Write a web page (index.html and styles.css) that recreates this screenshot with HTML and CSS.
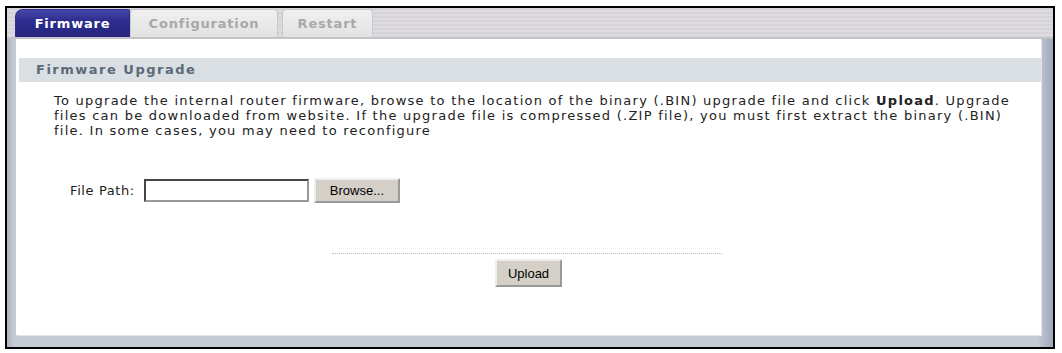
FILE: index.html
```html
<html>
  <head>
    <link rel="stylesheet" href="styles.css">
  </head>
  <body>
    <div class="frame">
      <nav class="tabs">
        <span class="tab active">Firmware</span>
        <span class="tab">Configuration</span>
        <span class="tab">Restart</span>
      </nav>
      <div class="panel">
        <h2>Firmware Upgrade</h2>
        <p class="intro">
          To upgrade the internal router firmware, browse to the location of the binary (.BIN) upgrade file and click <b>Upload</b>. Upgrade<br>
          files can be downloaded from website. If the upgrade file is compressed (.ZIP file), you must first extract the binary (.BIN)<br>
          file. In some cases, you may need to reconfigure
        </p>
        <div class="file-row">
          <label>File Path:</label>
          <input type="text" class="path">
          <button>Browse...</button>
        </div>
        <div class="actions">
          <hr>
          <button>Upload</button>
        </div>
      </div>
    </div>
  </body>
</html>
```

FILE: styles.css
```css
:root {
  --tab-blue: #2d2d8f;
  --band: #d9dfe3;
  --band-text: #5c6a78;
  --frame: #8e9ab0;
  --text: #222;
}

body {
  margin: 0;
  background: #fff;
  font-family: "DejaVu Sans", Verdana, sans-serif;
  color: var(--text);
}

.frame {
  margin: 6px 0 0 5px;
  width: 1046px;
  height: 339px;
  border: 2px solid #000;
  background: linear-gradient(to right, #aeb4c3, #c6cad4 7px, #c6cad4 1030px, #9ea8bc);
  background-color: var(--frame);
  display: flex;
  flex-direction: column;
}

.tabs {
  height: 29px;
  padding-left: 8px;
  display: flex;
  align-items: flex-end;
  background: repeating-linear-gradient(to bottom, #d6d4d9 0, #d6d4d9 2px, #dddbe0 2px, #dddbe0 4px);
  border-bottom: 2px solid #c4c4c8;
}

.tab {
  height: 28px;
  box-sizing: border-box;
  display: flex;
  align-items: center;
  justify-content: center;
  font-size: 13px;
  letter-spacing: 0.8px;
  font-weight: bold;
  color: #a8a8a8;
  background: linear-gradient(to bottom, #f0f0f0, #e2e2e2);
  border: 1px solid #c8c8c8;
  border-bottom: none;
  border-radius: 4px 4px 0 0;
}

.tab.active {
  width: 115px;
  color: #fff;
  background: linear-gradient(to bottom, #4848a8, var(--tab-blue) 40%, #26267f);
  border-color: var(--tab-blue);
  border-radius: 8px 2px 0 0;
}

.tab:nth-child(2) {
  width: 148px;
  margin-right: 4px;
}

.tab:nth-child(3) {
  width: 91px;
}

.panel {
  flex: 1;
  background: #fff;
  margin: 0 12px 12px 9px;
  padding-top: 19px;
  box-shadow: 1px 1px 0 #e4e6ec;
}

h2 {
  margin: 0 0 0 3px;
  height: 24px;
  line-height: 24px;
  padding-left: 17px;
  background: var(--band);
  font-size: 13px;
  letter-spacing: 1.5px;
  color: var(--band-text);
}

.intro {
  margin: 11px 0 0 38px;
  font-size: 13px;
  letter-spacing: 1.25px;
  line-height: 15px;
  white-space: nowrap;
}

.file-row {
  margin: 40px 0 0 54px;
  display: flex;
  align-items: center;
  font-size: 13px;
  letter-spacing: 0.6px;
}

.file-row label {
  margin-right: 9px;
}

.path {
  width: 165px;
  height: 23px;
  box-sizing: border-box;
  border: 2px inset #999;
  margin: 0 5px 0 0;
}

button {
  font-family: "Liberation Sans", Arial, sans-serif;
  font-size: 13px;
  letter-spacing: 0;
  height: 25px;
  padding: 0 14px;
  background: #d4d0c8;
  border: 2px outset #eee;
  color: #000;
}

.actions {
  margin-top: 50px;
  display: flex;
  flex-direction: column;
  align-items: center;
}

hr {
  width: 390px;
  margin: 0 0 5px -4px;
  border: none;
  border-top: 1px dotted #bbb;
}

.actions button {
  height: 28px;
  padding: 0 11px;
}
```
